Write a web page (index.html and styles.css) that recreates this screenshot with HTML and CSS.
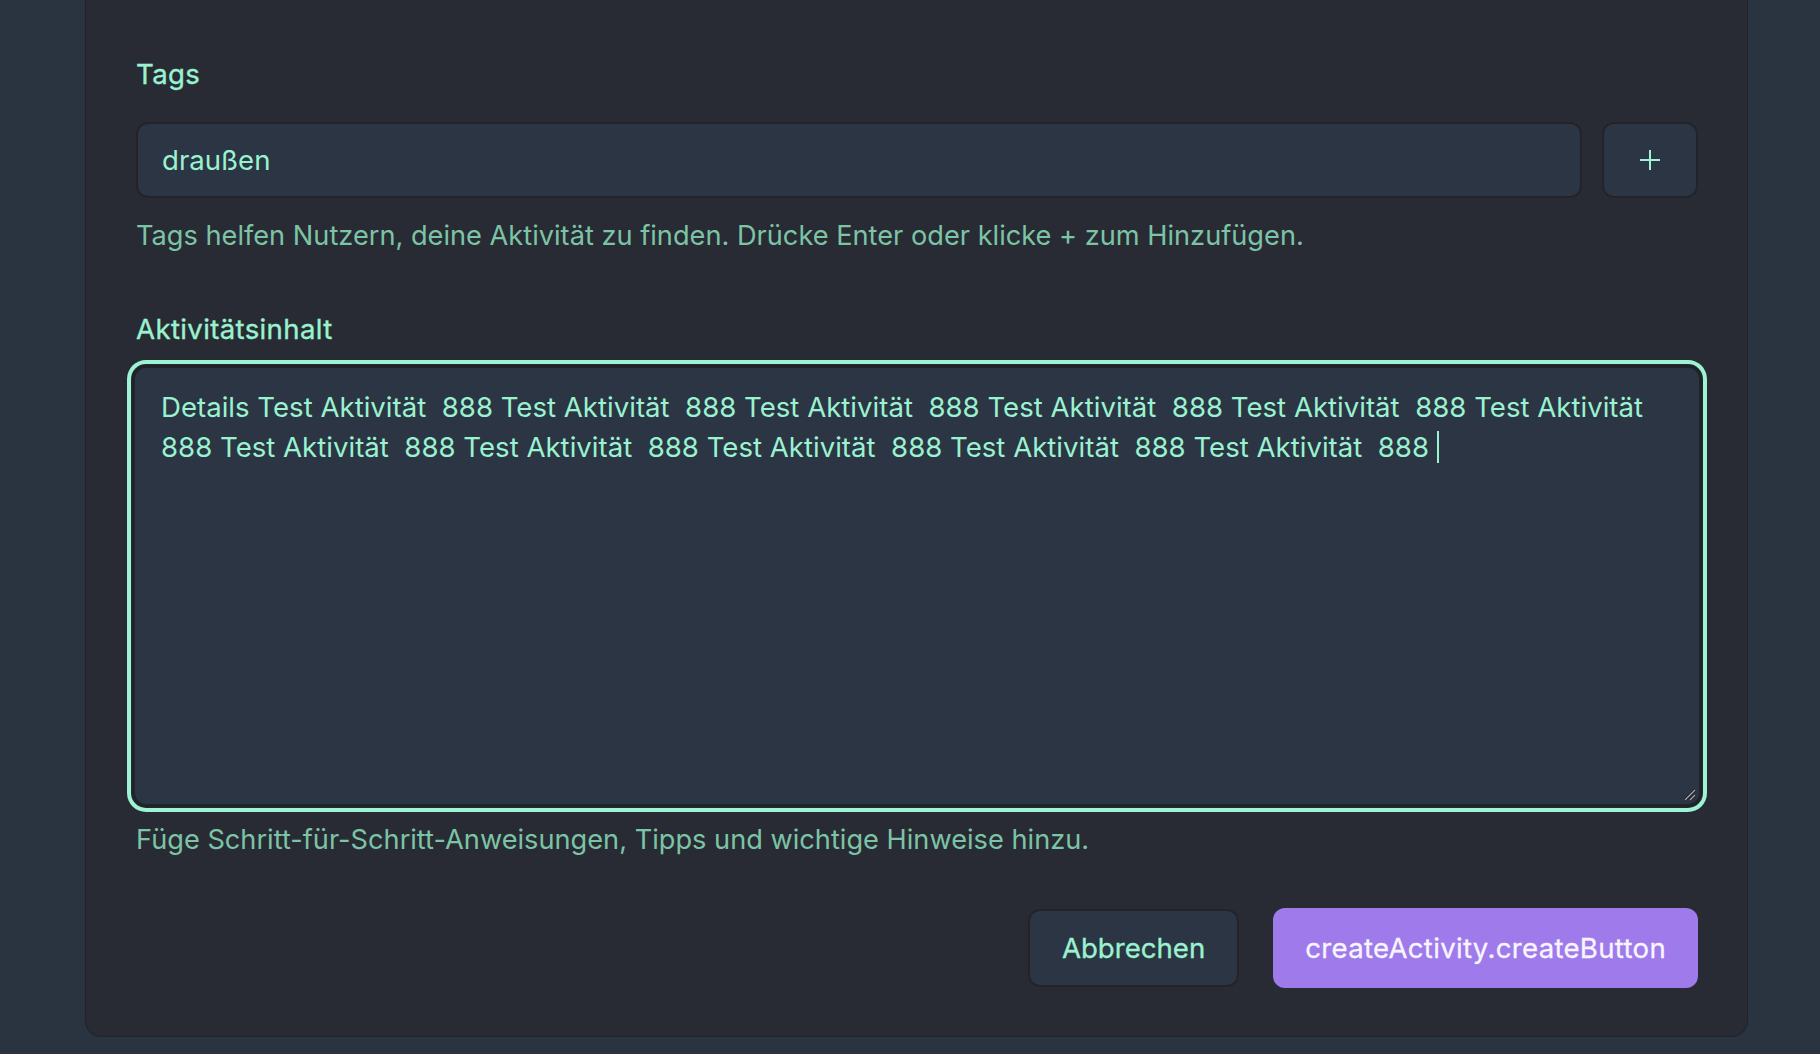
FILE: index.html
```html
<!DOCTYPE html>
<html lang="de">
<head>
<meta charset="utf-8">
<title>Aktivität erstellen</title>
<link rel="stylesheet" href="styles.css">
</head>
<body>
<div class="page">
  <form class="card">
    <div class="field">
      <label class="label">Tags</label>
      <div class="tag-row">
        <div class="input">draußen</div>
        <button type="button" class="add-btn" aria-label="Tag hinzufügen">
          <svg width="22" height="22" viewBox="0 0 22 22"><path d="M11 1v20M1 11h20" stroke="#9ef3d4" stroke-width="2" fill="none"/></svg>
        </button>
      </div>
      <p class="hint hint-tags">Tags helfen Nutzern, deine Aktivität zu finden. Drücke Enter oder klicke + zum Hinzufügen.</p>
    </div>
    <div class="field">
      <label class="label label-content">Aktivitätsinhalt</label>
      <div class="textarea" role="textbox" aria-multiline="true">Details Test Aktivität  888 Test Aktivität  888 Test Aktivität  888 Test Aktivität  888 Test Aktivität  888 Test Aktivität  888 Test Aktivität  888 Test Aktivität  888 Test Aktivität  888 Test Aktivität  888 Test Aktivität  888<span class="caret"></span><svg class="grip" width="14" height="14" viewBox="0 0 14 14"><path d="M2 12L12 2M7 12L12 7" stroke="#1c1e22" stroke-width="3"/><path d="M2 12L12 2M7 12L12 7" stroke="#a9adb4" stroke-width="1.2"/></svg></div>
      <p class="hint hint-content">Füge Schritt-für-Schritt-Anweisungen, Tipps und wichtige Hinweise hinzu.</p>
    </div>
    <div class="actions">
      <button type="button" class="btn btn-cancel">Abbrechen</button>
      <button type="button" class="btn btn-primary">createActivity.createButton</button>
    </div>
  </form>
</div>
</body>
</html>
```

FILE: styles.css
```css
* { box-sizing: border-box; }
html, body {
  margin: 0;
  padding: 0;
  background: #2a3441;
  height: 100%;
}
body {
  font-family: Inter, "Noto Sans", "Liberation Sans", sans-serif;
  color: #9af2d0;
  overflow: hidden;
}
.page {
  padding: 0 72px 0 85px;
}
.card {
  background: #282b33;
  border: 1px solid #222429;
  border-top: none;
  border-radius: 0 0 16px 16px;
  padding: 56px 49px 48px 50px;
  width: 1663px;
}
.label {
  display: block;
  font-size: 27.6px;
  font-weight: 400;
  letter-spacing: 0.35px;
  -webkit-text-stroke: 0.35px #9af2d0;
  line-height: 36px;
  color: #9af2d0;
}
.tag-row {
  display: flex;
  gap: 20px;
  margin-top: 30px;
  height: 76px;
}
.input {
  flex: 1;
  background: #2b3543;
  border: 2px solid #222429;
  border-radius: 12px;
  display: flex;
  align-items: center;
  padding: 0 24px;
  font-size: 27.6px;
  color: #9af2d0;
}
.add-btn {
  width: 96px;
  background: #2b3543;
  border: 2px solid #222429;
  border-radius: 12px;
  display: flex;
  align-items: center;
  justify-content: center;
  padding: 0;
}
.hint {
  margin: 0;
  font-size: 27.2px;
  line-height: 36px;
  color: #7cc4a6;
}
.hint-tags { margin-top: 20px; }
.label-content { margin-top: 57px; }
.textarea {
  position: relative;
  display: block;
  width: calc(100% + 8px);
  margin: 18px -4px 0 -4px;
  height: 442px;
  background: #2b3543;
  border: 3px solid #202328;
  border-radius: 14px;
  box-shadow: 0 0 0 1px #25282e, 0 0 0 5px #9ef3d4;
  padding: 19px 26px;
  font-size: 27.6px;
  line-height: 40px;
  color: #9af2d0;
  white-space: pre-wrap;
}
.caret {
  display: inline-block;
  width: 2px;
  height: 32px;
  margin-left: 8px;
  vertical-align: -6px;
  background: #9af2d0;
}
.grip {
  position: absolute;
  right: 2px;
  bottom: 2px;
}
.hint-content { margin-top: 15px; }
.actions {
  display: flex;
  justify-content: flex-end;
  gap: 34px;
  margin-top: 50px;
}
.btn {
  height: 80px;
  border-radius: 12px;
  padding: 0 32px;
  font-family: Inter, "Noto Sans", "Liberation Sans", sans-serif;
  font-size: 27.6px;
  font-weight: 400;
}
.btn-cancel {
  background: #2b3543;
  border: 2px solid #222429;
  color: #9af2d0;
  -webkit-text-stroke: 0.35px #9af2d0;
  height: 78px;
  margin-top: 1px;
  padding: 0 32px;
}
.btn-primary {
  background: #9f7aea;
  border: none;
  color: #f7f5ff;
  letter-spacing: 0.3px;
  -webkit-text-stroke: 0.3px #f7f5ff;
}
```
